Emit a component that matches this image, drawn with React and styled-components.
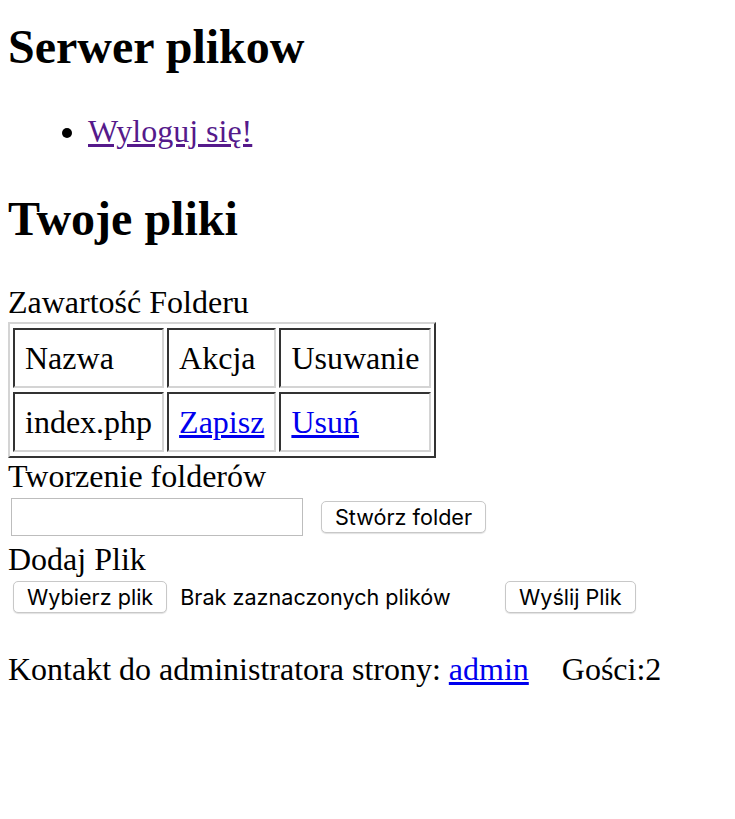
import React from "react";
import styled, { createGlobalStyle } from "styled-components";

const GlobalStyle = createGlobalStyle`
  html, body {
    margin: 0;
    padding: 0;
    background: #fff;
  }
  body {
    font-family: "Liberation Serif", "Times New Roman", serif;
    font-size: 32px;
    line-height: 36px;
    color: #000;
  }
`;

const Page = styled.div`
  padding: 0 8px;
  display: flow-root;
`;

const Title = styled.h1`
  font-size: 48px;
  line-height: 56px;
  font-weight: bold;
  margin: 19px 0 0;
`;

const SubTitle = styled.h2`
  font-size: 48px;
  line-height: 56px;
  font-weight: bold;
  margin: 42px 0 0;
`;

const Menu = styled.ul`
  margin: 38px 0 0;
  padding-left: 80px;
  list-style: disc;
`;

const Link = styled.a`
  color: ${(p) => (p.$visited ? "#551a8b" : "#0000ee")};
  text-decoration: underline;
  cursor: pointer;
`;

const Table = styled.table`
  margin-top: 37px;
  border: 2px solid;
  border-color: #d4d4d4 #333 #333 #d4d4d4;
  border-spacing: 3px 4px;
`;

const Caption = styled.caption`
  text-align: left;
  line-height: 36px;
  padding-bottom: 2px;
`;

const Cell = styled.td`
  border: 2px solid;
  border-color: #333 #d4d4d4 #d4d4d4 #333;
  padding: 10px;
  line-height: 36px;
  text-align: left;
`;

const Label = styled.div`
  line-height: 36px;
  margin-top: ${(p) => p.$top || 0}px;
`;

const FormRow = styled.div`
  display: flex;
  align-items: center;
  margin-top: ${(p) => p.$top || 0}px;
  height: ${(p) => p.$height}px;
`;

const TextInput = styled.input`
  box-sizing: border-box;
  width: 292px;
  height: 38px;
  margin: 0 0 0 3px;
  border: 1px solid #bdbdbd;
  background: #fff;
  outline: none;
`;

const Button = styled.button`
  box-sizing: border-box;
  height: 32px;
  margin: 0 0 0 ${(p) => p.$left || 0}px;
  padding: 0 13px;
  font-family: Inter, "Liberation Sans", sans-serif;
  font-size: 21.6px;
  color: #000;
  background: #fff;
  border: 1px solid #c8c8c8;
  border-radius: 5px;
  box-shadow: 0 1px 1px rgba(0, 0, 0, 0.12);
  white-space: nowrap;
`;

const FilePicker = styled.div`
  display: flex;
  align-items: center;
  width: 480px;
  margin-left: 5px;
`;

const FileStatus = styled.span`
  margin-left: 13px;
  font-family: Inter, "Liberation Sans", sans-serif;
  font-size: 21.6px;
  white-space: nowrap;
`;

const Footer = styled.p`
  margin: 38px 0 0;
  line-height: 36px;
`;

const Guests = styled.span`
  margin-left: 33px;
`;

export default function App() {
  return (
    <>
      <GlobalStyle />
      <Page>
        <Title>Serwer plikow</Title>
        <Menu>
          <li>
            <Link $visited>Wyloguj się!</Link>
          </li>
        </Menu>
        <SubTitle>Twoje pliki</SubTitle>
        <Table>
          <Caption>Zawartość Folderu</Caption>
          <tbody>
            <tr>
              <Cell>Nazwa</Cell>
              <Cell>Akcja</Cell>
              <Cell>Usuwanie</Cell>
            </tr>
            <tr>
              <Cell>index.php</Cell>
              <Cell>
                <Link>Zapisz</Link>
              </Cell>
              <Cell>
                <Link>Usuń</Link>
              </Cell>
            </tr>
          </tbody>
        </Table>
        <Label>Tworzenie folderów</Label>
        <FormRow $top={4} $height={38}>
          <TextInput type="text" />
          <Button $left={18}>Stwórz folder</Button>
        </FormRow>
        <Label $top={5}>Dodaj Plik</Label>
        <FormRow $top={4} $height={32}>
          <FilePicker>
            <Button>Wybierz plik</Button>
            <FileStatus>Brak zaznaczonych plików</FileStatus>
          </FilePicker>
          <Button $left={12}>Wyślij Plik</Button>
        </FormRow>
        <Footer>
          Kontakt do administratora strony: <Link>admin</Link>
          <Guests>Gości:2</Guests>
        </Footer>
      </Page>
    </>
  );
}
